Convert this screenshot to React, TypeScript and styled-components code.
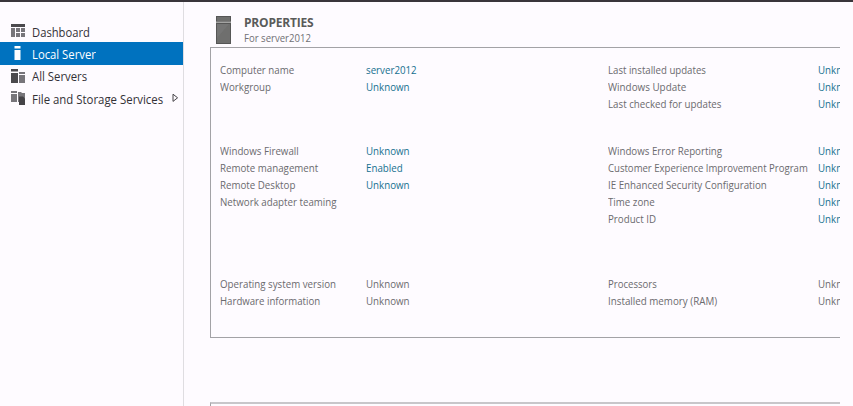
import React from "react";
import styled, { createGlobalStyle } from "styled-components";

const GlobalStyle = createGlobalStyle`
  * { box-sizing: border-box; }
  body { margin: 0; background: #fefbff; overflow: hidden; }
`;

const Window = styled.div`
  display: flex;
  width: 853px;
  height: 406px;
  overflow: hidden;
  border-top: 2px solid #39353b;
  background: #fefbff;
  font-family: "Open Sans", "Noto Sans", sans-serif;
`;

const Sidebar = styled.nav`
  flex: none;
  width: 184px;
  padding-top: 18px;
  border-right: 1px solid #dfdde1;
`;

const NavItem = styled.div<{ $active?: boolean }>`
  display: flex;
  align-items: center;
  height: 22.3px;
  padding-left: 11px;
  font-size: 12px;
  color: ${(p) => (p.$active ? "#fff" : "#333136")};
  background: ${(p) => (p.$active ? "#0072bf" : "transparent")};
`;

const NavIcon = styled.svg`
  flex: none;
  width: 14px;
  height: 14px;
  margin-right: 7px;
`;

const NavLabel = styled.span<{ $scale: number }>`
  padding-top: 2px;
  white-space: nowrap;
  transform: scaleX(${(p) => p.$scale});
  transform-origin: left center;
`;

const Arrow = styled.svg`
  flex: none;
  width: 7px;
  height: 10px;
  margin-left: auto;
  margin-right: 4px;
`;

const Main = styled.main`
  flex: none;
  width: 656px;
  padding-left: 26px;
  overflow: hidden;
`;

const Header = styled.header`
  display: flex;
  height: 45px;
  padding: 14px 0 0 6px;
`;

const ServerIcon = styled.svg`
  flex: none;
  width: 15px;
  height: 28px;
  margin-right: 13px;
`;

const Title = styled.h1`
  margin: 0;
  font-size: 12px;
  line-height: 14px;
  font-weight: 700;
  letter-spacing: -0.2px;
  color: #5a5b5a;
`;

const Subtitle = styled.div`
  padding-top: 1px;
  font-size: 11px;
  line-height: 14px;
  transform: scaleX(0.87);
  transform-origin: left center;
  color: #707074;
`;

const Panel = styled.section`
  height: 291px;
  padding: 13px 0 0 9px;
  border: 1px solid #a3a2a6;
  border-right: 0;
`;

const Group = styled.div<{ $height: number }>`
  display: grid;
  grid-template-columns: 388px 1fr;
  height: ${(p) => p.$height}px;
`;

const Row = styled.div<{ $labelWidth: number }>`
  display: grid;
  grid-template-columns: ${(p) => p.$labelWidth}px 1fr;
  justify-items: start;
  height: 17.1px;
  font-size: 11px;
  line-height: 17px;
  white-space: nowrap;
`;

const Label = styled.span<{ $scale: number }>`
  color: #6b6a6e;
  transform: scaleX(${(p) => p.$scale});
  transform-origin: left center;
`;

const Value = styled.span<{ $link: boolean }>`
  color: ${(p) => (p.$link ? "#16708f" : "#6b6a6e")};
  transform: scaleX(0.885);
  transform-origin: left center;
`;

const NextPanel = styled.section`
  height: 20px;
  margin-top: 64px;
  border: 1px solid #a3a2a6;
  border-top: 2px solid #c8c6ca;
  border-right: 0;
`;

type Entry = [label: string, value: string, scale?: number];

const groups: { height: number; link: boolean; left: Entry[]; right: Entry[] }[] = [
  {
    height: 81,
    link: true,
    left: [
      ["Computer name", "server2012"],
      ["Workgroup", "Unknown"],
    ],
    right: [
      ["Last installed updates", "Unknown", 0.877],
      ["Windows Update", "Unknown", 0.895],
      ["Last checked for updates", "Unknown"],
    ],
  },
  {
    height: 133,
    link: true,
    left: [
      ["Windows Firewall", "Unknown"],
      ["Remote management", "Enabled"],
      ["Remote Desktop", "Unknown"],
      ["Network adapter teaming", ""],
    ],
    right: [
      ["Windows Error Reporting", "Unknown"],
      ["Customer Experience Improvement Program", "Unknown", 0.87],
      ["IE Enhanced Security Configuration", "Unknown"],
      ["Time zone", "Unknown"],
      ["Product ID", "Unknown"],
    ],
  },
  {
    height: 40,
    link: false,
    left: [
      ["Operating system version", "Unknown"],
      ["Hardware information", "Unknown", 0.876],
    ],
    right: [
      ["Processors", "Unknown", 0.87],
      ["Installed memory (RAM)", "Unknown", 0.89],
    ],
  },
];

function Column({ entries, labelWidth, link }: { entries: Entry[]; labelWidth: number; link: boolean }) {
  return (
    <div>
      {entries.map(([label, value, scale = 0.885]) => (
        <Row key={label} $labelWidth={labelWidth}>
          <Label $scale={scale}>{label}</Label>
          <Value $link={link}>{value}</Value>
        </Row>
      ))}
    </div>
  );
}

export default function App() {
  return (
    <>
      <GlobalStyle />
      <Window>
        <Sidebar>
          <NavItem>
            <NavIcon viewBox="0 0 14 14">
              <path fill="#4b494d" d="M0 0h14v3H0z" />
              <path fill="#77757a" d="M0 4h4v9H0zM5 4h4v4H5zM10 4h4v4h-4zM5 9h4v4H5zM10 9h4v4h-4z" />
            </NavIcon>
            <NavLabel $scale={0.935}>Dashboard</NavLabel>
          </NavItem>
          <NavItem $active>
            <NavIcon viewBox="0 0 14 14">
              <path fill="#fff" d="M3.500 0h6v2.500h-6zM3.500 4h6v10h-6z" />
            </NavIcon>
            <NavLabel $scale={0.94}>Local Server</NavLabel>
          </NavItem>
          <NavItem>
            <NavIcon viewBox="0 0 14 14">
              <path fill="#4b494d" d="M0 0h7v2.500H0zM0 4h7v10H0z" />
              <path fill="#77757a" d="M8 3h6v2H8zM8 6h6v8H8z" />
            </NavIcon>
            <NavLabel $scale={0.945}>All Servers</NavLabel>
          </NavItem>
          <NavItem>
            <NavIcon viewBox="0 0 14 14">
              <path fill="#77757a" d="M0 0h6v2H0zM0 3h6v8H0zM7 1h3l1 1h3v3H7zM7 5h7v6H7z" />
              <path fill="#454347" d="M8 5.500h4l2 2V14H8z" />
            </NavIcon>
            <NavLabel $scale={0.95}>File and Storage Services</NavLabel>
            <Arrow viewBox="0 0 7 10">
              <path d="M1 1.200v7.200L5.600 4.800z" fill="none" stroke="#454347" />
            </Arrow>
          </NavItem>
        </Sidebar>
        <Main>
          <Header>
            <ServerIcon viewBox="0 0 15 28">
              <path fill="#565656" d="M0 0h15v28H0z" />
              <path fill="#6f6f6e" d="M1 1h13v4H1zM1 8h13v19H1z" />
              <path fill="#a3a3a2" d="M0 5.500h15v1.500H0z" />
              <path fill="#7c7c7b" d="M1 8h12L1 22z" opacity=".5" />
            </ServerIcon>
            <div>
              <Title>PROPERTIES</Title>
              <Subtitle>For server2012</Subtitle>
            </div>
          </Header>
          <Panel>
            {groups.map((g) => (
              <Group key={g.height} $height={g.height}>
                <Column entries={g.left} labelWidth={146} link={g.link} />
                <Column entries={g.right} labelWidth={210} link={g.link} />
              </Group>
            ))}
          </Panel>
          <NextPanel />
        </Main>
      </Window>
    </>
  );
}
